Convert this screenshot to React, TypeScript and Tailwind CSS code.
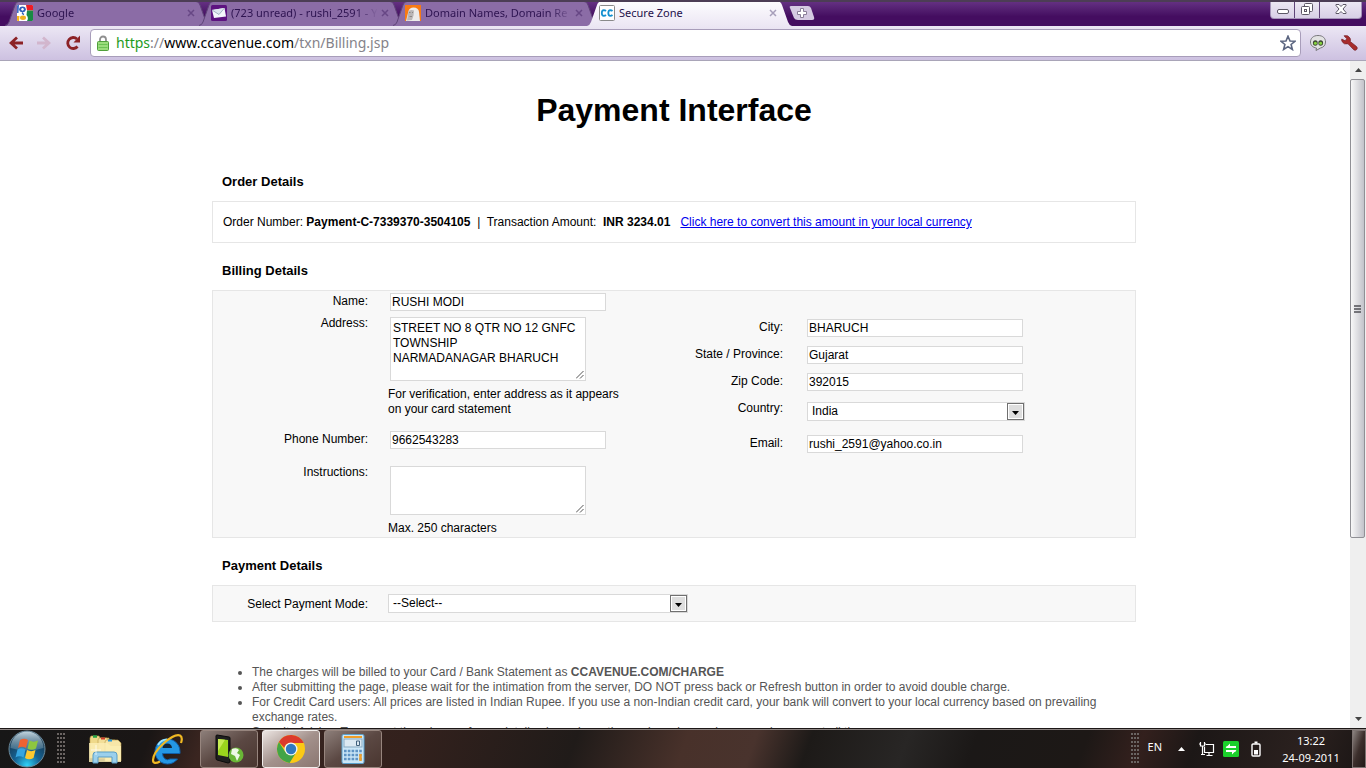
import React from "react";

const uiFont = "font-['Noto_Sans','Open_Sans',sans-serif]";
const pageFont = "font-['Liberation_Sans',Arial,sans-serif]";

function GoogleIcon() {
  return (
    <svg viewBox="0 0 16 16" className="size-4 shrink-0">
      <rect width="16" height="16" rx="1" fill="#fff" />
      <path d="M9 0h6q1 0 1 1v4.500H10z" fill="#ee1c24" />
      <path d="M10 5.500h6V15q0 1-1 1h-5q2-3-.500-6z" fill="#1a8a44" />
      <path d="M0 1q0-1 1-1h1L1.500 8H0z" fill="#3f6fc8" />
      <path d="M0 11h2.500l-.500 5H1q-1 0-1-1z" fill="#f7b418" />
      <ellipse cx="5.500" cy="4.300" rx="3.300" ry="2.900" fill="#2f5fb8" />
      <ellipse cx="5.500" cy="4.300" rx="1.200" ry="1.400" fill="#fff" />
      <path d="M6 7.500q-1.500 1 1 2" fill="none" stroke="#2f5fb8" strokeWidth="1.400" />
      <ellipse cx="6" cy="12.800" rx="3" ry="2.200" fill="#f0b020" />
    </svg>
  );
}

function MailIcon() {
  return (
    <svg viewBox="0 0 16 16" className="size-4 shrink-0">
      <rect width="16" height="16" rx="1.500" fill="#5d1280" />
      <path d="M1 5l12.500-2 1.500 8.500-12 1.500z" fill="#f4f7fb" />
      <path d="M1 5l7 4.500 5.500-6.500" fill="#dfe8f0" stroke="#9aaabd" strokeWidth=".9" />
    </svg>
  );
}

function DomainIcon() {
  return (
    <svg viewBox="0 0 16 16" className="size-4 shrink-0">
      <rect width="16" height="16" fill="#f77a14" />
      <path d="M1 16l2.500-10q1-3.500 5-3.500 5 0 5.500 4.500l1 9z" fill="#ecebea" />
      <path d="M3.500 6q2.500-1.500 5.500-.5l-.5 5-1.500 4.500-5 .5z" fill="#b9b6b6" />
      <path d="M4 7.500h1.500M7 7.500h1M4.500 11.500h2.500" stroke="#8b8684" />
    </svg>
  );
}

function CcIcon() {
  return (
    <svg viewBox="0 0 16 16" className="size-4 shrink-0">
      <rect x=".5" y=".5" width="15" height="15" rx="1" fill="#fff" stroke="#8a8a8a" />
      <path d="M7 6q-1-.9-2.200-.9Q2.800 5.200 2.800 8t2 2.900Q6 10.900 7 10M13.500 6q-1-.9-2.200-.9-2 .1-2 2.900t2 2.900q1.200 0 2.200-.9" fill="none" stroke="#1490d0" strokeWidth="1.800" />
    </svg>
  );
}

type TabProps = { icon: React.ReactNode; title: string; active?: boolean };

function Tab({ icon, title, active }: TabProps) {
  return (
    <div className={`relative -mr-[11px] h-[25px] w-[205px] shrink-0 ${active ? "z-10" : ""}`}>
      <svg viewBox="0 0 205 25" className="absolute inset-0 h-[25px] w-[205px]">
        <defs>
          <linearGradient id="activeTab" x1="0" y1="0" x2="0" y2="1">
            <stop offset="0" stopColor="#fdfcfe" />
            <stop offset="1" stopColor="#ece7f4" />
          </linearGradient>
        </defs>
        <path
          d="M0 25Q3 24 4 21L10 4Q11 .5 14 .5H191Q194 .5 195 4L201 21Q202 24 205 25Z"
          fill={active ? "url(#activeTab)" : "#8b6ca6"}
        />
        {!active && (
          <path
            d="M0 24.500Q3 24 4 21L10 4Q11 .5 14 .5H191Q194 .5 195 4L201 21Q202 24 205 24.500"
            fill="none"
            stroke="#5f4478"
          />
        )}
      </svg>
      <div className="relative flex h-6 items-center gap-1 pr-[15px] pl-3">
        {icon}
        <button type="button" className={`min-w-0 flex-1 text-left text-[11px] leading-4 whitespace-nowrap ${active ? "text-[#24104a]" : "text-[#2d1350] [mask-image:linear-gradient(to_right,black_125px,transparent_147px)]"}`}>
          {title}
        </button>
        <button type="button" aria-label={`Close ${title}`} className="shrink-0">
          <svg viewBox="0 0 8 8" className="size-2">
            <path d="M1 1l6 6M7 1L1 7" stroke={active ? "#a79fba" : "#674785"} strokeWidth="1.500" />
          </svg>
        </button>
      </div>
    </div>
  );
}

function WindowButtons() {
  const cell = "flex h-4 items-center justify-center";
  return (
    <div className="mr-1 flex h-[17px] self-start rounded-b-[4px] border border-t-0 border-[#a494b8] bg-linear-to-b from-[#ece8f3] to-[#d8cfe6]">
      <button type="button" aria-label="Minimize" className={`${cell} w-6 border-r border-[#5f4478]`}>
        <svg viewBox="0 0 14 14" className="size-3.5"><rect x="1.500" y="6.500" width="11" height="4" rx="1.500" fill="#fff" stroke="#5c5766" /></svg>
      </button>
      <button type="button" aria-label="Restore" className={`${cell} w-[25px] border-r border-[#5f4478]`}>
        <svg viewBox="0 0 14 14" className="size-3.5" fill="#fff" stroke="#5c5766">
          <rect x="4.500" y=".5" width="8" height="8" rx="1" />
          <rect x="1.500" y="3.500" width="8" height="8" rx="1" />
          <rect x="4.500" y="6.500" width="2" height="2" />
        </svg>
      </button>
      <button type="button" aria-label="Close window" className={`${cell} w-[41px]`}>
        <svg viewBox="0 0 14 14" className="size-3.5"><path d="M2 1.500h3l2 2 2-2h3v1L9 6l3 3.500v1H9l-2-2-2 2H2v-1L5 6 2 2.500z" fill="#fff" stroke="#5c5766" /></svg>
      </button>
    </div>
  );
}

function BrowserChrome() {
  return (
    <header className={`shrink-0 ${uiFont}`}>
      <div className="flex h-[26px] items-end overflow-hidden border-t-2 border-[#4c3d55] bg-linear-to-b from-[#643082] to-[#440d60] to-60% pl-[5px]">
        <Tab icon={<GoogleIcon />} title="Google" />
        <Tab icon={<MailIcon />} title="(723 unread) - rushi_2591 - Y" />
        <Tab icon={<DomainIcon />} title="Domain Names, Domain Re" />
        <Tab icon={<CcIcon />} title="Secure Zone" active />
        <button type="button" aria-label="New tab" className="ml-2 self-start pt-1">
          <svg viewBox="0 0 26 14" className="h-3.5 w-[26px]">
            <path d="M2 0h17q2 0 3 2l3 9q1 3-2 3H9q-3 0-4-2L1 2Q0 0 2 0z" fill="#d5cae2" />
            <path d="M11.500 2.500h3v3h3v3h-3v3h-3v-3h-3v-3h3z" fill="#fff" stroke="#8a7f99" />
          </svg>
        </button>
        <div className="flex-1" />
        <WindowButtons />
      </div>
      <div className="flex h-[35px] items-center border-b border-[#a9a5b8] bg-linear-to-b from-[#ece7f4] to-[#cdc1e1] pr-2 pl-[9px]">
        <button type="button" aria-label="Back" className="mr-3.5">
          <svg viewBox="0 0 14 14" className="size-3.5"><path d="M8 1.500L2 7l6 5.500M2.500 7H14" fill="none" stroke="#8c2226" strokeWidth="2.800" /></svg>
        </button>
        <button type="button" aria-label="Forward" className="mr-3.5">
          <svg viewBox="0 0 14 14" className="size-3.5"><path d="M6 1.500L12 7l-6 5.500M11.500 7H0" fill="none" stroke="#d2b6cd" strokeWidth="2.800" /></svg>
        </button>
        <button type="button" aria-label="Reload" className="mr-[9px]">
          <svg viewBox="0 0 16 16" className="size-4"><path d="M12.500 11.500A5.500 5.500 0 1 1 12 4" fill="none" stroke="#8c2226" strokeWidth="2.800" /><path d="M15 .5V7.500H8.500z" fill="#8c2226" /></svg>
        </button>
        <div className="flex h-7 flex-1 items-center rounded-[4px] border border-[#a89dba] bg-white pr-1 pl-1.5">
          <svg viewBox="0 0 12 16" className="h-4 w-3 shrink-0">
            <path d="M3 8V4.500a3 3 0 0 1 6 0V8" fill="none" stroke="#8f8f8f" strokeWidth="1.800" />
            <rect x=".5" y="6.500" width="11" height="9" rx="1" fill="#9bdc7c" stroke="#4f9f3a" />
            <path d="M1.500 9.500h9M1.500 12.500h9" stroke="#6cc255" />
          </svg>
          <div role="textbox" aria-label="Address" className="ml-[7px] flex-1 text-[14px] leading-5 text-[#85838a]">
            <span className="text-[#1e9b1e]">https</span>://<span className="text-black">www.ccavenue.com</span>/txn/Billing.jsp
          </div>
          <button type="button" aria-label="Bookmark this page">
            <svg viewBox="0 0 16 16" className="size-4"><path d="M8 1.200l2 4.800 5 .3-3.900 3.200 1.300 5L8 11.700l-4.400 2.800 1.300-5L1 6.300 6 6z" fill="#fff" stroke="#5b6580" strokeWidth="1.600" /></svg>
          </button>
        </div>
        <button type="button" aria-label="Extension" className="ml-[9px]">
          <svg viewBox="0 0 16 16" className="size-4">
            <path d="M8 .5c5 0 7.500 2.800 7.500 6.500S13 12.500 10.500 13L6 15.500l.5-2.500C3 12.500.5 10.500.5 7S3 .5 8 .5z" fill="#e2e2e2" stroke="#77777a" />
            <ellipse cx="5.300" cy="8" rx="2.400" ry="2.700" fill="#3c4632" />
            <ellipse cx="10.700" cy="8" rx="2.400" ry="2.700" fill="#3c4632" />
            <circle cx="5.400" cy="8.300" r="1.500" fill="#86d43e" />
            <circle cx="10.600" cy="8.300" r="1.500" fill="#86d43e" />
          </svg>
        </button>
        <button type="button" aria-label="Settings" className="ml-[15px]">
          <svg viewBox="0 0 17 16" className="h-4 w-[17px]"><path d="M3 .8Q7-.3 9 3q.8 2 .2 3.500l6.300 5q1.500 1.500.2 3t-3 .2L7 8.800Q3 10 1 6.500.4 5 .8 4L4 5.800l1.800-2z" fill="#a82c2c" stroke="#742026" strokeWidth=".7" /></svg>
        </button>
      </div>
    </header>
  );
}

const field = "border border-[#d9d9d9] bg-white text-[12px] text-black outline-none";

function Label({ id, children }: { id: string; children: React.ReactNode }) {
  return <label htmlFor={id} className="h-4 pt-px text-right">{children}</label>;
}

function Field({ id, value }: { id: string; value: string }) {
  return <input id={id} defaultValue={value} className={`${field} h-[18px] w-[216px] px-px`} />;
}

function Area({ id, value, className }: { id: string; value: string; className: string }) {
  return (
    <div className="relative mt-0.5 w-[196px]">
      <textarea id={id} defaultValue={value} className={`${field} block w-full resize-none px-0.5 py-[3px] leading-[15px] ${className}`} />
      <svg viewBox="0 0 8 8" className="pointer-events-none absolute right-0.5 bottom-0.5 size-2"><path d="M0 7.500L7.500 0M4 7.500L7.500 4" stroke="#555" fill="none" /></svg>
    </div>
  );
}

function Select({ id, value, className }: { id: string; value: string; className: string }) {
  return (
    <div className={`relative ${className}`}>
      <select id={id} className={`${field} block h-[19px] w-full appearance-none pl-1`}>
        <option>{value}</option>
      </select>
      <svg viewBox="0 0 17 17" className="pointer-events-none absolute top-px right-px size-[17px]">
        <rect x=".5" y=".5" width="16" height="16" fill="#fff" stroke="#707070" />
        <rect x="2" y="2" width="13" height="13" fill="#dedede" />
        <path d="M5 8h7l-3.500 4z" fill="#000" />
      </svg>
    </div>
  );
}

function SectionTitle({ children }: { children: React.ReactNode }) {
  return <h2 className="px-2.5 pt-5 pb-3 text-[13px] leading-[15px] font-bold">{children}</h2>;
}

function BillingForm() {
  return (
    <div className="grid grid-cols-2 border border-[#e6e6e6] bg-[#f8f8f8] pt-0.5 pb-px">
      <div className="grid grid-cols-[155px_1fr] content-start gap-x-5">
        <Label id="name">Name:</Label>
        <div className="mb-1 flex pl-0.5"><Field id="name" value="RUSHI MODI" /></div>
        <Label id="address">Address:</Label>
        <div className="mb-3.5">
          <div className="pl-0.5"><Area id="address" value={"STREET NO 8 QTR NO 12 GNFC TOWNSHIP\nNARMADANAGAR BHARUCH"} className="h-16" /></div>
          <p className="mt-1.5">For verification, enter address as it appears<br />on your card statement</p>
        </div>
        <Label id="phone">Phone Number:</Label>
        <div className="mb-[15px] flex pl-0.5"><Field id="phone" value="9662543283" /></div>
        <Label id="instructions">Instructions:</Label>
        <div>
          <div className="pl-0.5"><Area id="instructions" value="" className="h-[49px]" /></div>
          <p className="mt-1.5">Max. 250 characters</p>
        </div>
      </div>
      <div className="grid grid-cols-[109px_1fr] content-start gap-x-6 gap-y-[9px] pt-[26px]">
        <Label id="city">City:</Label>
        <Field id="city" value="BHARUCH" />
        <Label id="state">State / Province:</Label>
        <Field id="state" value="Gujarat" />
        <Label id="zip">Zip Code:</Label>
        <Field id="zip" value="392015" />
        <Label id="country">Country:</Label>
        <Select id="country" value="India" className="mt-0.5 mb-[5px] w-[218px]" />
        <Label id="email">Email:</Label>
        <Field id="email" value="rushi_2591@yahoo.co.in" />
      </div>
    </div>
  );
}

function PageScrollbar() {
  return (
    <div aria-hidden="true" className="flex w-4 shrink-0 flex-col bg-[#efefef]">
      <div className="flex h-[18px] items-center justify-center"><svg viewBox="0 0 7 4" className="h-1 w-[7px]"><path d="M0 4h7L3.500 0z" fill="#444" /></svg></div>
      <div className="mr-px flex h-[459px] items-center justify-center rounded-[2px] border border-[#909095] bg-linear-to-r from-[#f8f8f8] to-[#c3c3ca]">
        <svg viewBox="0 0 8 8" className="size-2"><path d="M0 1h7M0 4h7M0 7h7" stroke="#505055" strokeWidth="1.300" /></svg>
      </div>
      <div className="flex-1" />
      <div className="flex h-[18px] items-center justify-center"><svg viewBox="0 0 7 4" className="h-1 w-[7px]"><path d="M0 0h7L3.500 4z" fill="#444" /></svg></div>
    </div>
  );
}

function TaskButton({ label, active, children }: { label: string; active?: boolean; children: React.ReactNode }) {
  return (
    <button
      type="button"
      aria-label={label}
      className={`mr-1 flex h-[38px] w-[58px] items-center justify-center rounded-[3px] border ${active ? "border-[#f0ecea] bg-linear-to-br from-[#ece5e2] via-[#a3918c] to-[#8b7771]" : "border-[#97857e] bg-linear-to-br from-[#8d7f7a] via-[#5b4843] to-[#4a3630]"}`}
    >
      {children}
    </button>
  );
}

function Gripper() {
  return <span className="h-8 w-2 bg-[radial-gradient(circle_at_1px_1px,#6a6462_0.8px,transparent_1px)] bg-size-[3px_4px]" />;
}

function Taskbar() {
  return (
    <footer className={`flex h-10 shrink-0 items-center border-t border-[#1c1716] bg-[linear-gradient(110deg,#171717_0%,#1a1615_11%,#3a2520_15%,#33211d_30%,#201b19_42%,#48312a_50%,#49332d_55%,#1d1a18_59%,#282625_66%,#1b1817_71%,#1d1816_79%,#33201d_83%,#1c1716_87%,#2b211f_95%,#1a1514_100%)] text-white shadow-[inset_0_1px_0_#8d8583] ${uiFont}`}>
      <button type="button" aria-label="Start" className="ml-2">
        <svg viewBox="0 0 38 38" className="size-[38px]">
          <defs>
            <radialGradient id="orb" cx=".5" cy=".95" r=".8"><stop offset="0" stopColor="#2ed3f8" /><stop offset=".45" stopColor="#156394" /><stop offset="1" stopColor="#17364f" /></radialGradient>
            <linearGradient id="orbShine" x1="0" y1="0" x2="0" y2="1"><stop offset="0" stopColor="#d4e6ee" stopOpacity=".9" /><stop offset="1" stopColor="#7fa5b8" stopOpacity=".35" /></linearGradient>
          </defs>
          <circle cx="19" cy="19" r="18" fill="url(#orb)" stroke="#6c8b9c" />
          <path d="M2.500 18a16.500 16.500 0 0 1 33 0q-16 5-33 0z" fill="url(#orbShine)" />
          <path d="M12 10q4-2.500 8 0l-2 8q-4-2.500-8 0z" fill="#ee6232" />
          <path d="M21.500 10.500q4 2.300 8.500 0l-2 8q-4.500 2.500-8.500 0z" fill="#8dc63f" />
          <path d="M9.500 19.500q4-2.500 8 0l-2 8q-4-2.500-8 0z" fill="#35a5e0" />
          <path d="M19 20q4 2.300 8.500 0l-2 8q-4.500 2.500-8.500 0z" fill="#fdc82f" />
        </svg>
      </button>
      <div className="mr-[23px] ml-[11px] flex"><Gripper /></div>
      <button type="button" aria-label="File explorer" className="mr-7">
        <svg viewBox="0 0 34 34" className="size-[34px]">
          <path d="M2 6l1-2h8l1 2h9v20H2z" fill="#efd98a" stroke="#b89b48" strokeWidth=".6" />
          <path d="M10 8l1-2h8l1 2h7v18H10z" fill="#f3df99" stroke="#b89b48" strokeWidth=".6" />
          <path d="M17 10l1-2h12l3 3v18H17z" fill="#f7e6a8" stroke="#b89b48" strokeWidth=".6" />
          <path d="M1 11h18l4 3h10v16H1z" fill="#fbedb4" opacity=".85" />
          <path d="M5 4.500h4" stroke="#27a344" strokeWidth="2.500" /><path d="M13 6.500h4" stroke="#cf3c2c" strokeWidth="2" /><path d="M20 8.500h4" stroke="#2796d8" strokeWidth="2" />
          <path d="M5 31V23q0-3 3-3h18q3 0 3 3v8h-5v-6H10v6z" fill="#9bd0ec" stroke="#5a9dc4" />
          <path d="M8 13v10M3 18h10" stroke="#fff" strokeWidth=".7" />
        </svg>
      </button>
      <button type="button" aria-label="Internet browser" className="mr-4">
        <svg viewBox="0 0 34 34" className="size-[34px]">
          <path d="M30 19.500a12.500 12.500 0 1 0-2.500 7.500h-7.500Q17 29 14.500 26.500q-2-2-2-5H30z" fill="#2496e4" stroke="#1160aa" />
          <path d="M12.500 16q.5-4.500 4.800-4.500t4.700 4.500z" fill="#132539" />
          <path d="M8 13q3-5.500 9-5.500" fill="none" stroke="#9be2fb" strokeWidth="2" />
          <path d="M31 11q2-6-1-7.500Q25 1.500 14 11 3 21 3 28q0 5 7 1.500" fill="none" stroke="#f0b823" strokeWidth="2.200" />
        </svg>
      </button>
      <TaskButton label="Phone manager">
        <svg viewBox="0 0 30 30" className="size-[30px]">
          <path d="M2 2q0-1 1-1l12 2q1 0 1 1v23q0 2-2 2L3 26q-1 0-1-2z" fill="#202020" stroke="#0b0b0b" />
          <path d="M4 5l10 1v17L4 21z" fill="#9bd51d" /><path d="M4 5l7 .7L4 17z" fill="#c7ec54" />
          <circle cx="22" cy="21" r="7.500" fill="#69b636" /><path d="M18 15q5-2 7 1l-2 3 3 2-3 6-2-5-4-2z" fill="#eef8e6" />
        </svg>
      </TaskButton>
      <TaskButton label="Web browser" active>
        <svg viewBox="0 0 30 30" className="size-[30px]">
          <circle cx="15" cy="15" r="14" fill="#fbc915" />
          <path d="M2.900 8A14 14 0 0 1 27.700 9H15q-6 0-6.500 5z" fill="#dc3a2b" />
          <path d="M2.900 8A14 14 0 0 0 13.500 29l6-9.500q-7.500 3-10.500-2z" fill="#43a447" />
          <circle cx="15" cy="15" r="6.500" fill="#f4f4f4" /><circle cx="15" cy="15" r="5.200" fill="#3179c0" />
        </svg>
      </TaskButton>
      <TaskButton label="Calculator">
        <svg viewBox="0 0 24 30" className="h-[30px] w-6">
          <rect x="1" y=".5" width="22" height="29" rx="1.500" fill="#cbe6f7" stroke="#5aa0cc" />
          <path d="M3 3h18" stroke="#ee9d28" strokeWidth="2" /><rect x="3" y="5" width="18" height="8" fill="#dce9f2" stroke="#87a9c2" />
          <path d="M15.500 7h3v4.500h-3z" fill="none" stroke="#41617c" />
          <path d="M3 17h18M3 21h18M3 25h18" stroke="#5e93c4" strokeWidth="2.600" strokeDasharray="2.600 1.200" /><path d="M19.500 20v7" stroke="#f0a02c" strokeWidth="2.500" />
        </svg>
      </TaskButton>
      <div className="flex-1" />
      <Gripper />
      <span className="mr-4 ml-[9px] pb-1 text-[11px] leading-4">EN</span>
      <svg viewBox="0 0 7 4" className="mr-3.5 h-1 w-[7px]"><path d="M0 4h7L3.500 0z" fill="#fff" /></svg>
      <svg viewBox="0 0 16 16" className="mr-2 size-4">
        <path d="M1.500 1v4h4V1M3.500 5v9M0 3h1M6 3h1M2 13.500h4" fill="none" stroke="#fff" strokeWidth="1.200" />
        <path d="M7 3.500h7.500v8H5.500V6M7.500 14.500h6M10 12v2" fill="none" stroke="#fff" strokeWidth="1.200" />
      </svg>
      <svg viewBox="0 0 16 16" className="mr-3 size-4">
        <rect width="16" height="16" rx="1.500" fill="#1bd02b" />
        <path d="M3.500 6H13M3 10h9.500" stroke="#fff" strokeWidth="2" />
        <path d="M7 2.500V7H2.500zM9 13.500V9h4.500z" fill="#fff" />
      </svg>
      <svg viewBox="0 0 10 16" className="mr-5 h-4 w-2.5"><rect x="1" y="3" width="8" height="12" rx="1" fill="none" stroke="#fff" strokeWidth="1.400" /><path d="M3.500 1.500h3" stroke="#fff" strokeWidth="2" /><rect x="3" y="9" width="4" height="4.500" fill="#fff" /></svg>
      <time className="w-[60px] text-center text-[11px] leading-[17px] whitespace-nowrap">13:22<br />24-09-2011</time>
      <button type="button" aria-label="Show desktop" className="ml-[11px] h-[38px] w-3.5 border border-[#7d7371] bg-linear-to-br from-[#8d8582] via-[#3c2f2c] to-[#221917]" />
    </footer>
  );
}

export default function App() {
  return (
    <div className="flex h-screen flex-col overflow-hidden bg-white text-black">
      <BrowserChrome />
      <div className="flex min-h-0 flex-1">
        <main className={`min-w-0 flex-1 overflow-hidden pr-0.5 text-[12px] leading-[15px] ${pageFont}`}>
          <div className="mx-auto max-w-[924px]">
            <h1 className="pt-[30px] pb-[25px] text-center text-[32px] leading-[38px] font-bold">Payment Interface</h1>
            <SectionTitle>Order Details</SectionTitle>
            <div className="border border-[#e6e6e6] px-2.5 pt-[13px] pb-3">
              Order Number: <b>Payment-C-7339370-3504105</b>&nbsp; |&nbsp; Transaction Amount:&nbsp; <b>INR 3234.01</b>&nbsp;&nbsp;{" "}
              <a href="#convert" className="text-[#0000ee] underline">Click here to convert this amount in your local currency</a>
            </div>
            <SectionTitle>Billing Details</SectionTitle>
            <BillingForm />
            <SectionTitle>Payment Details</SectionTitle>
            <div className="grid grid-cols-[155px_1fr] gap-x-5 border border-[#e6e6e6] bg-[#f8f8f8] py-2">
              <label htmlFor="mode" className="pt-[3px] text-right">Select Payment Mode:</label>
              <Select id="mode" value="--Select--" className="w-[300px]" />
            </div>
            <ul className="mt-[43px] list-disc pr-4 pl-10 text-[#555]">
              <li>The charges will be billed to your Card / Bank Statement as <b>CCAVENUE.COM/CHARGE</b></li>
              <li>After submitting the page, please wait for the intimation from the server, DO NOT press back or Refresh button in order to avoid double charge.</li>
              <li>For Credit Card users: All prices are listed in Indian Rupee. If you use a non-Indian credit card, your bank will convert to your local currency based on prevailing exchange rates.</li>
              <li className="list-none">Security Advice: To prevent the misuse of your details please keep the card number and password secure at all times.</li>
            </ul>
          </div>
        </main>
        <PageScrollbar />
      </div>
      <Taskbar />
    </div>
  );
}
